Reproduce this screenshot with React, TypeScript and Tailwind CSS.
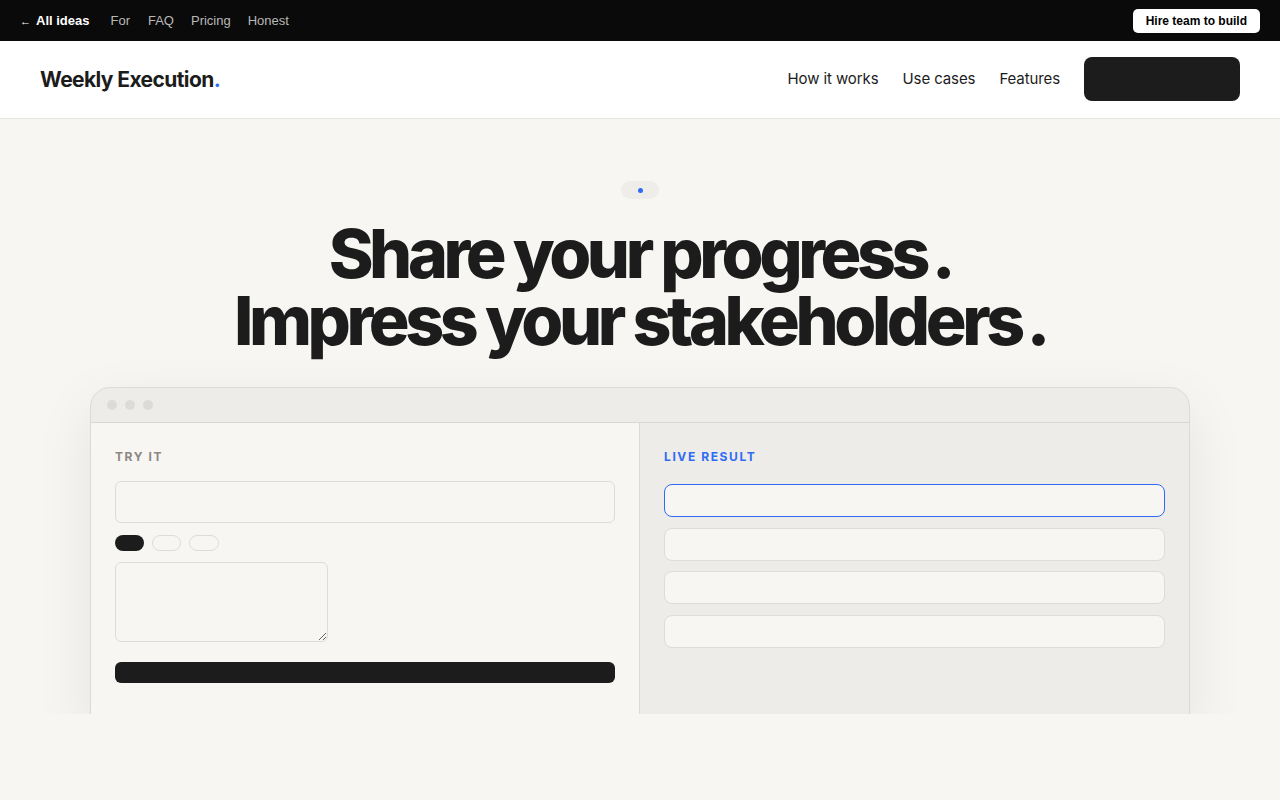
import React from "react";

const sans = { fontFamily: "Inter, 'Noto Sans', sans-serif" };

function TopBar() {
  return (
    <div className="h-[41px] bg-[#0a0a0a] flex items-center justify-between px-5" style={{ fontFamily: "'Liberation Sans', Arial, sans-serif" }}>
      <div className="flex items-center text-[13px]">
        <span className="text-white font-bold"><span className="text-[11px] font-normal mr-[5px]">←</span>All ideas</span>
        <span className="text-[#b8b8b8] ml-[21px]">For</span>
        <span className="text-[#b8b8b8] ml-[18px]">FAQ</span>
        <span className="text-[#b8b8b8] ml-[17px]">Pricing</span>
        <span className="text-[#b8b8b8] ml-[17px]">Honest</span>
      </div>
      <button className="h-6 px-[13px] bg-white rounded-[5px] text-[12px] font-bold text-black">Hire team to build</button>
    </div>
  );
}

function NavBar() {
  return (
    <div className="h-[78px] bg-white border-b border-[#e6e4df] flex items-center justify-between pl-10 pr-10" style={sans}>
      <div className="text-[21px] font-bold tracking-[-0.6px] text-[#1c1c1c]">
        Weekly Execution<span className="text-[#2f6bf6]">.</span>
      </div>
      <div className="flex items-center">
        <a className="text-[15px] text-[#1c1c1c] tracking-[-0.1px]">How it works</a>
        <a className="text-[15px] text-[#1c1c1c] tracking-[-0.1px] ml-6">Use cases</a>
        <a className="text-[15px] text-[#1c1c1c] tracking-[-0.1px] ml-6">Features</a>
        <div className="w-[156px] h-[44px] bg-[#1c1c1c] rounded-lg ml-6 -mt-[2px]" />
      </div>
    </div>
  );
}

function Mockup() {
  return (
    <div className="w-[1100px] mx-auto mt-[33px] rounded-t-[20px] border border-[#dcdad5] bg-[#edece8] overflow-hidden shadow-[0_20px_60px_rgba(0,0,0,0.08)]">
      <div className="h-[35px] flex items-center gap-[8px] px-[16px] border-b border-[#dad8d3]">
        <span className="w-[10px] h-[10px] rounded-full bg-[#dcdbd8]" />
        <span className="w-[10px] h-[10px] rounded-full bg-[#dcdbd8]" />
        <span className="w-[10px] h-[10px] rounded-full bg-[#dcdbd8]" />
      </div>
      <div className="grid grid-cols-2 h-[300px]">
        <div className="bg-[#f7f6f2] px-6 pt-[25px] border-r border-[#dcdad5]">
          <div className="text-[12px] font-bold tracking-[1.6px] text-[#8a8884]">TRY IT</div>
          <div className="mt-[15px] h-[42px] rounded-[6px] border border-[#dedcd8]" />
          <div className="flex gap-[8px] mt-[12px]">
            <span className="w-[29px] h-[16px] rounded-full bg-[#1c1c1c]" />
            <span className="w-[29px] h-[16px] rounded-full border border-[#dedcd8]" />
            <span className="w-[30px] h-[16px] rounded-full border border-[#dedcd8]" />
          </div>
          <textarea readOnly className="block mt-[11px] w-[213px] h-[80px] rounded-[6px] border border-[#dedcd8] bg-transparent outline-none" />
          <div className="mt-[20px] h-[21px] rounded-[6px] bg-[#1c1c1c]" />
        </div>
        <div className="bg-[#edece8] px-6 pt-[25px]">
          <div className="text-[12px] font-bold tracking-[1.6px] text-[#2f6bf6]">LIVE RESULT</div>
          <div className="mt-[18px] flex flex-col gap-[10.5px]">
            <div className="h-[33px] rounded-[8px] border border-[#2f6bf6] bg-[#f7f6f2]" />
            <div className="h-[33px] rounded-[8px] border border-[#dedcd8] bg-[#f7f6f2]" />
            <div className="h-[33px] rounded-[8px] border border-[#dedcd8] bg-[#f7f6f2]" />
            <div className="h-[33px] rounded-[8px] border border-[#dedcd8] bg-[#f7f6f2]" />
          </div>
        </div>
      </div>
    </div>
  );
}

export default function App() {
  return (
    <div className="min-h-[800px] bg-[#f7f6f2]">
      <TopBar />
      <NavBar />
      <section className="h-[595px] overflow-hidden" style={sans}>
        <div className="flex justify-center pt-[62px]">
          <div className="w-[38px] h-[18px] rounded-full bg-[#eeede9] flex items-center justify-center">
            <span className="w-[5px] h-[5px] rounded-full bg-[#2f6bf6]" />
          </div>
        </div>
        <h1 className="mt-[21px] text-center text-[68px] leading-[67px] font-extrabold tracking-[-4.4px] text-[#1c1c1c]">
          {"Share your progress\u2009."}
          <br />
          {"Impress your stakeholders\u2009."}
        </h1>
        <Mockup />
      </section>
    </div>
  );
}
